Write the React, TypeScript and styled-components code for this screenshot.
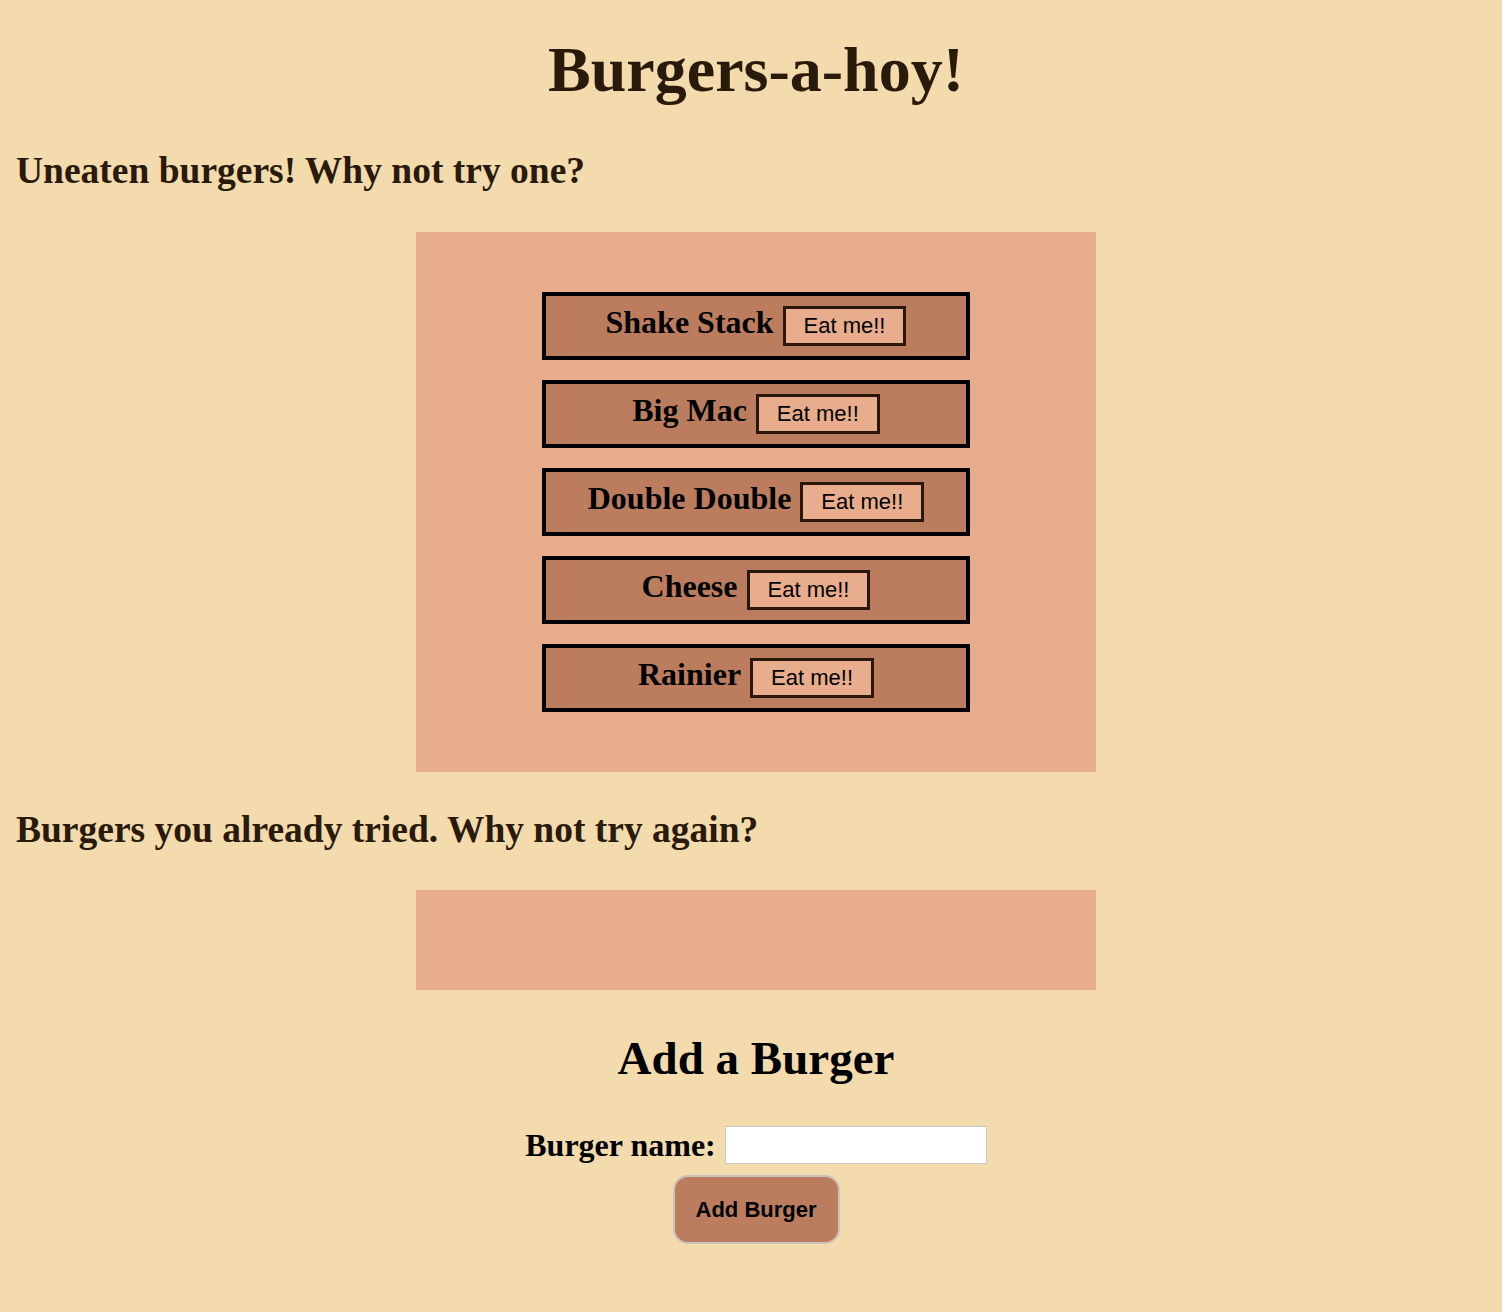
import React from "react";
import styled, { createGlobalStyle } from "styled-components";

const Global = createGlobalStyle`
  html, body { margin: 0; padding: 0; background: #f3dbad; }
  body { font-family: "Liberation Serif", "Times New Roman", serif; }
`;

const Page = styled.div`
  padding: 0 6px 40px 16px;
  min-height: 1312px;
  box-sizing: border-box;
  background: #f3dbad;
`;

const Title = styled.h1`
  margin: 33px 0 0;
  font-size: 64px;
  line-height: 74px;
  font-weight: 700;
  text-align: center;
  color: #2a1a0a;
`;

const SectionHeading = styled.h2<{ $top: number }>`
  margin: ${(p) => p.$top}px 0 0;
  font-size: 37.5px;
  line-height: 43px;
  font-weight: 700;
  color: #2a1a0a;
`;

const Panel = styled.div<{ $top: number; $minHeight?: number }>`
  width: 680px;
  margin: ${(p) => p.$top}px auto 0;
  min-height: ${(p) => p.$minHeight ?? 0}px;
  box-sizing: border-box;
  background: #e7ad8d;
  padding: ${(p) => (p.$minHeight ? 0 : 60)}px 0;
  display: flex;
  flex-direction: column;
  align-items: center;
  gap: 20px;
`;

const Item = styled.div`
  width: 428px;
  height: 68px;
  box-sizing: border-box;
  border: 4px solid #000;
  background: #bc7d5e;
  display: flex;
  align-items: center;
  justify-content: center;
  gap: 9px;
`;

const ItemName = styled.span`
  font-size: 32px;
  font-weight: 700;
  color: #000;
  line-height: 36px;
  padding-bottom: 8px;
`;

const EatButton = styled.button`
  height: 40px;
  box-sizing: border-box;
  border: 3px solid #2b1708;
  background: #e8ad8c;
  padding: 0 18px;
  font-family: "Liberation Sans", Arial, sans-serif;
  font-size: 22px;
  color: #000;
  cursor: pointer;
`;

const AddHeading = styled.h2`
  margin: 41px 0 0;
  font-size: 47px;
  line-height: 54px;
  font-weight: 700;
  text-align: center;
  color: #000;
`;

const Form = styled.form`
  margin: 41px 0 0;
  display: flex;
  flex-direction: column;
  align-items: center;
  gap: 11px;
`;

const FieldRow = styled.div`
  display: flex;
  align-items: center;
  gap: 9px;
  height: 38px;
`;

const Label = styled.label`
  font-size: 32px;
  line-height: 38px;
  font-weight: 700;
  color: #000;
`;

const Input = styled.input`
  width: 262px;
  height: 38px;
  box-sizing: border-box;
  border: 1px solid #c8c8c8;
  background: #fff;
  padding: 2px 4px;
  font-size: 18px;
`;

const AddButton = styled.button`
  width: 167px;
  height: 69px;
  box-sizing: border-box;
  border: 2px solid #cbc3bb;
  border-radius: 15px;
  background: #bc7d5e;
  font-family: "Liberation Sans", Arial, sans-serif;
  font-weight: 700;
  font-size: 22px;
  color: #000;
  cursor: pointer;
`;

const burgers = ["Shake Stack", "Big Mac", "Double Double", "Cheese", "Rainier"];

export default function App() {
  return (
    <>
      <Global />
      <Page>
        <Title>Burgers-a-hoy!</Title>
        <SectionHeading $top={42}>Uneaten burgers! Why not try one?</SectionHeading>
        <Panel $top={40}>
          {burgers.map((b) => (
            <Item key={b}>
              <ItemName>{b}</ItemName>
              <EatButton type="button">Eat me!!</EatButton>
            </Item>
          ))}
        </Panel>
        <SectionHeading $top={36}>Burgers you already tried. Why not try again?</SectionHeading>
        <Panel $top={39} $minHeight={100} />
        <AddHeading>Add a Burger</AddHeading>
        <Form onSubmit={(e) => e.preventDefault()}>
          <FieldRow>
            <Label htmlFor="burger-name">Burger name:</Label>
            <Input id="burger-name" type="text" />
          </FieldRow>
          <AddButton type="submit">Add Burger</AddButton>
        </Form>
      </Page>
    </>
  );
}
